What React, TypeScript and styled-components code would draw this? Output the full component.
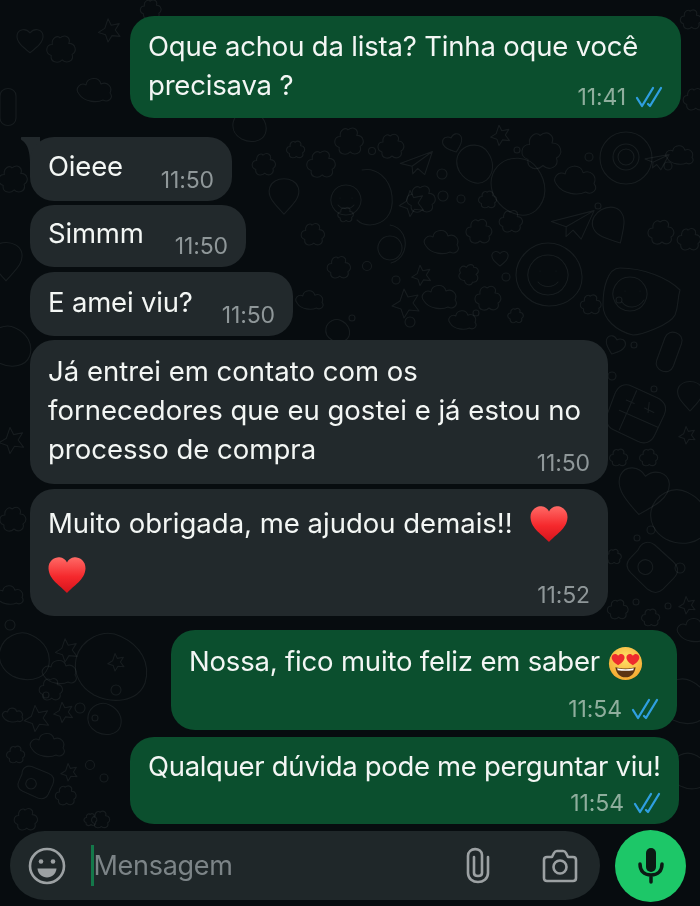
import { styled, createGlobalStyle } from "styled-components";

const GlobalStyle = createGlobalStyle`
  html, body {
    margin: 0;
    padding: 0;
    background: #070c0f;
  }
`;

const Page = styled.div`
  position: relative;
  width: 700px;
  height: 906px;
  overflow: hidden;
  background: #070c0f;
  font-family: Inter, "Liberation Sans", sans-serif;
  display: flex;
  flex-direction: column;
  filter: blur(0.35px);
`;

const Wallpaper = styled.svg`
  position: absolute;
  inset: 0;
  width: 700px;
  height: 906px;
  fill: none;
  stroke: rgba(190, 205, 200, 0.09);
  stroke-width: 1.1;
  stroke-linecap: round;
  stroke-linejoin: round;
`;

const Chat = styled.main`
  position: relative;
  flex: 1;
  display: flex;
  flex-direction: column;
  padding-top: 16px;
`;

const Bubble = styled.div<{ $out?: boolean; $w: number; $h: number; $top?: number; $inset: number; $pad?: number }>`
  display: grid;
  grid-template-columns: minmax(0, 1fr);
  box-sizing: border-box;
  width: ${(p) => p.$w}px;
  height: ${(p) => p.$h}px;
  margin-top: ${(p) => p.$top ?? 0}px;
  align-self: ${(p) => (p.$out ? "flex-end" : "flex-start")};
  margin-left: ${(p) => (p.$out ? 0 : p.$inset)}px;
  margin-right: ${(p) => (p.$out ? p.$inset : 0)}px;
  padding: ${(p) => p.$pad ?? 10}px 18px 8px 18px;
  border-radius: 24px;
  background: ${(p) => (p.$out ? "#0b4f2e" : "#22292c")};
`;

const Tail = styled.svg`
  position: absolute;
  left: 20px;
  top: 137px;
  width: 20px;
  height: 26px;
  fill: #22292c;
`;

const Text = styled.div<{ $lh?: number; $track?: number }>`
  grid-area: 1 / 1;
  align-self: start;
  color: #f3f6f4;
  font-size: 27.5px;
  line-height: ${(p) => p.$lh ?? 39}px;
  letter-spacing: ${(p) => p.$track ?? -0.18}px;
  white-space: nowrap;
`;

const Meta = styled.div<{ $out?: boolean }>`
  grid-area: 1 / 1;
  align-self: end;
  justify-self: end;
  display: flex;
  align-items: center;
  gap: 9px;
  height: 26px;
  color: ${(p) => (p.$out ? "#8fae9d" : "#8f9799")};
  font-size: 23px;
  letter-spacing: -0.1px;
`;

const Checks = styled.svg`
  width: 28px;
  height: 22px;
  fill: none;
  stroke: #2f9fe0;
  stroke-width: 2.3;
  stroke-linecap: round;
  stroke-linejoin: round;
`;

const Emoji = styled.svg<{ $gap?: number; $size?: number }>`
  width: ${(p) => p.$size ?? 38}px;
  height: ${(p) => p.$size ?? 38}px;
  vertical-align: -10px;
  margin-left: ${(p) => p.$gap ?? 0}px;
`;

const Composer = styled.footer`
  position: relative;
  display: flex;
  align-items: flex-start;
  gap: 15px;
  height: 82px;
  padding: 6px 14px 0 10px;
  box-sizing: border-box;
`;

const InputBar = styled.div`
  flex: 1;
  height: 69px;
  margin-top: 1px;
  display: flex;
  align-items: center;
  padding: 0 22px 0 18px;
  border-radius: 35px;
  background: #1f2729;
  color: #9ca1a3;
`;

const Caret = styled.span`
  width: 2.5px;
  height: 41px;
  margin-left: 25px;
  background: #14784a;
`;

const Placeholder = styled.span`
  flex: 1;
  padding-left: 0;
  color: #7c8487;
  font-size: 27px;
  letter-spacing: -0.3px;
`;

const BarIcon = styled.svg<{ $gap?: number }>`
  flex: none;
  margin-left: ${(p) => p.$gap ?? 0}px;
  fill: none;
  stroke: currentColor;
  stroke-width: 2.6;
  stroke-linecap: round;
  stroke-linejoin: round;
`;

const MicButton = styled.button`
  width: 71px;
  height: 72px;
  padding: 0;
  border: 0;
  border-radius: 50%;
  background: #1dc768;
  display: flex;
  align-items: center;
  justify-content: center;
`;

const doodles: Record<string, string> = {
  flower: "M0 -11c5 -4 10 0 8 5c6 0 8 7 3 10c2 6 -5 9 -9 5c-4 4 -11 2 -10 -4c-6 -2 -5 -10 1 -10c-1 -6 5 -9 7 -6z",
  star: "M0 -14l4 8l10 -2l-5 8l6 8l-10 -1l-5 8l-3 -9l-9 -3l8 -5z",
  cloud: "M-16 4c-5 -6 2 -12 7 -9c1 -8 13 -9 15 -1c6 -3 12 3 9 9c4 5 -2 10 -7 7c-6 3 -19 2 -24 -6z",
  plane: "M-24 2l46 -17l-11 33l-10 -9l-7 8l-1 -11zM-7 6l29 -21",
  heart: "M0 16c-9 -7 -18 -14 -16 -23c2 -7 11 -8 16 -2c5 -6 14 -5 16 2c2 9 -7 16 -16 23z",
  blob: "M-24 -4c3 -13 18 -21 30 -15c13 6 20 18 16 31c-5 13 -22 14 -34 8c-9 -5 -14 -14 -12 -24z",
  pin: "M0 16c-8 -9 -14 -14 -12 -22c3 -10 21 -10 24 0c2 8 -4 13 -12 22z",
  pill: "M-8 -14c0 -10 16 -10 16 0v22c0 10 -16 10 -16 0z",
  bag: "M-20 -8c0 -8 6 -12 13 -10l22 9c7 3 9 8 6 15l-6 13c-3 6 -8 7 -14 5l-20 -9c-6 -3 -8 -8 -5 -14z M-8 -2a7 7 0 1 0 .1 0z",
  calc: "M-22 -12c3 -7 8 -10 15 -7l22 10c6 3 9 8 6 15l-8 17c-3 7 -9 9 -15 6l-21 -10c-6 -3 -8 -9 -5 -15z M-18 2l34 15 M-3 -15l-15 34 M-12 -7l7 3 M4 0l8 4 M8 -5l-1 9",
};

type Doodle = [keyof typeof doodles, number, number, number?, number?];

const placed: Doodle[] = [
  ["flower", 348, 142, 1.1], ["flower", 390, 147, 1], ["plane", 417, 162, 0.7], ["heart", 453, 143, 0.6, -20],
  ["blob", 476, 163, 0.8, 30], ["star", 499, 135, 0.7], ["flower", 540, 152, 1.5], ["flower", 487, 200, 0.7],
  ["blob", 520, 185, 1.2, 30], ["cloud", 576, 180, 1.2], ["flower", 320, 165, 1.1], ["flower", 420, 200, 1.1],
  ["star", 410, 203, 0.9], ["plane", 573, 222, 0.9, 6], ["pin", 610, 225, 1.3, -30], ["flower", 660, 233, 1],
  ["flower", 478, 232, 1], ["cloud", 442, 242, 1], ["flower", 510, 222, 0.9], ["heart", 500, 258, 0.5],
  ["star", 420, 275, 0.7], ["flower", 338, 268, 0.9], ["flower", 468, 274, 0.8, 40], ["cloud", 440, 297, 1],
  ["flower", 487, 299, 1], ["star", 404, 303, 1], ["cloud", 463, 320, 0.8], ["flower", 515, 316, 0.6],
  ["flower", 590, 305, 0.8], ["flower", 688, 240, 0.9], ["plane", 657, 160, 0.5, 10], ["cloud", 680, 155, 0.8],
  ["pill", 668, 355, 1.1, 20], ["heart", 615, 345, 0.6, 20], ["pin", 690, 395, 1], ["calc", 640, 408, 1.15],
  ["star", 686, 435, 0.6], ["flower", 618, 458, 0.7], ["flower", 648, 458, 0.7], ["heart", 643, 490, 1.55, 10],
  ["blob", 680, 515, 1.2], ["bag", 655, 565, 1.05, 20], ["flower", 613, 557, 0.6], ["star", 686, 605, 0.6],
  ["flower", 617, 610, 0.8], ["flower", 650, 618, 0.7], ["cloud", 695, 630, 1], ["blob", 685, 700, 1], ["blob", 690, 770, 0.8],
  ["pill", 8, 110, 1], ["flower", 12, 180, 1.1], ["pin", 6, 260, 1.3], ["blob", 10, 345, 0.9], ["star", 10, 440, 0.9],
  ["flower", 12, 520, 1], ["cloud", 10, 595, 0.8], ["blob", 25, 655, 1.05], ["cloud", 60, 672, 1],
  ["star", 65, 650, 0.8], ["blob", 112, 665, 1.5], ["star", 115, 662, 0.6], ["flower", 50, 690, 0.9],
  ["cloud", 13, 715, 0.6], ["star", 35, 718, 0.9], ["star", 62, 712, 0.7], ["blob", 105, 718, 0.7], ["cloud", 48, 745, 1],
  ["flower", 15, 755, 0.7], ["bag", 37, 780, 0.75], ["star", 68, 772, 0.6], ["flower", 65, 796, 0.8],
  ["flower", 25, 820, 0.9], ["flower", 100, 820, 0.7], ["flower", 90, 820, 0.5],
  ["flower", 150, 10, 0.8], ["flower", 60, 50, 1.1], ["cloud", 95, 90, 1], ["heart", 30, 40, 0.8], ["star", 108, 30, 0.8],
  ["blob", 250, 125, 0.7], ["flower", 295, 150, 0.7], ["flower", 263, 165, 0.9], ["pin", 284, 195, 1.2], ["flower", 312, 235, 0.9],
  ["flower", 345, 215, 0.6], ["cloud", 310, 300, 0.8], ["blob", 338, 330, 0.5], ["flower", 690, 20, 0.8], ["flower", 694, 100, 0.9],
];

const dots: [number, number, number][] = [
  [372, 151, 3.5], [442, 174, 5], [443, 196, 5], [461, 199, 4], [517, 150, 3], [589, 157, 4], [367, 266, 4.5], [396, 280, 4],
  [506, 277, 4], [668, 166, 4], [598, 206, 3], [619, 300, 3], [634, 345, 3], [654, 389, 3], [612, 376, 4], [651, 530, 4],
  [637, 538, 3], [680, 568, 5], [636, 602, 3], [668, 606, 3], [46, 695, 3], [116, 690, 5], [80, 708, 5], [95, 718, 3],
  [90, 765, 4.5], [104, 778, 4], [10, 625, 5], [352, 318, 3], [410, 322, 5], [476, 313, 3],
];

function Heart({ gap }: { gap?: number }) {
  return (
    <Emoji $gap={gap} viewBox="0 0 38 38">
      <defs>
        <linearGradient id="heartFill" x1="0" y1="0" x2="0" y2="1">
          <stop offset="0" stopColor="#ff6a66" />
          <stop offset="0.55" stopColor="#f5282c" />
          <stop offset="1" stopColor="#d5141c" />
        </linearGradient>
      </defs>
      <path
        fill="url(#heartFill)"
        d="M19 37C13 30 1 24 .5 12.5C.2 4.500 7 .8 11.500 1.200C15 1.500 17.800 3.500 19 6.500C20.200 3.500 23 1.500 26.500 1.200C31 .8 37.800 4.500 37.500 12.500C37 24 25 30 19 37z"
      />
    </Emoji>
  );
}

function HeartEyes() {
  return (
    <Emoji $gap={0} $size={35} viewBox="0 0 38 38">
      <defs>
        <radialGradient id="faceFill" cx="0.5" cy="0.35" r="0.7">
          <stop offset="0" stopColor="#ffe168" />
          <stop offset="1" stopColor="#f3a52c" />
        </radialGradient>
      </defs>
      <circle cx="19" cy="19" r="18" fill="url(#faceFill)" />
      <path fill="#ee2b2e" d="M11 21c-3 -2 -7 -5 -7 -8.500c0 -4 5 -5 7 -2c2 -3 7 -2 7 2c0 3.500 -4 6.500 -7 8.500z" />
      <path fill="#ee2b2e" d="M27 21c-3 -2 -7 -5 -7 -8.500c0 -4 5 -5 7 -2c2 -3 7 -2 7 2c0 3.500 -4 6.500 -7 8.500z" />
      <path fill="#5b3413" d="M8 23c7 2 15 2 22 0c-1 7 -5 11 -11 11s-10 -4 -11 -11z" />
      <path fill="#fff" d="M10 24.200c6 1.300 12 1.300 18 0l-.5 2c-5.500 1 -11.500 1 -17 0z" />
    </Emoji>
  );
}

function Read() {
  return (
    <Checks viewBox="0 0 28 22">
      <path d="M2 12l5 8L18 2" />
      <path d="M13 18l2 2L26 2" />
    </Checks>
  );
}

export default function App() {
  return (
    <Page>
      <GlobalStyle />
      <Wallpaper viewBox="0 0 700 906">
        {placed.map(([kind, x, y, s = 1, r = 0], i) => (
          <path key={i} d={doodles[kind]} transform={`translate(${x} ${y}) rotate(${r}) scale(${s})`} vectorEffect="non-scaling-stroke" />
        ))}
        {dots.map(([x, y, r], i) => (
          <circle key={i} cx={x} cy={y} r={r} />
        ))}
        <circle cx="626" cy="158" r="26" />
        <circle cx="626" cy="157" r="13" />
        <circle cx="626" cy="157" r="8" />
        <path d="M346 185a15 15 0 1 1 -.1 0zM340 198h.1M352 198h.1M338 205c4 5 12 5 16 0M362 170c14 -3 28 8 30 26c2 19 -8 28 -22 29c-6 0 -10 -2 -13 -5" />
        <path d="M390 225c12 2 18 14 14 26c-3 8 -9 11 -13 12M390 236a12 12 0 1 1 -.1 0z" />
        <path d="M548 243c16 0 33 13 34 33c1 17 -14 30 -33 30c-16 0 -33 -13 -33 -31c0 -18 16 -32 32 -32z" />
        <path d="M548 255a20 20 0 1 1 -.1 0zM540 271h.1M556 271h.1M538 282c5 6 15 6 20 0" />
        <path d="M620 268c24 0 48 10 60 22c-3 10 -1 15 -5 25c-5 10 -34 20 -42 20c-17 -4 -30 -16 -30 -30c0 -16 4 -37 17 -37z" />
        <path d="M630 277a17 17 0 1 1 -.1 0zM625 291h.1M640 291h.1M622 302c5 7 16 7 22 -2" />
      </Wallpaper>
      <Tail viewBox="0 0 20 26">
        <path d="M1.500 0H20V26H10C10 16 8 8 3 4C.5 3 .5 .8 1.500 0z" />
      </Tail>
      <Chat>
        <Bubble $out $w={551} $h={102} $inset={19} $pad={11}>
          <Text>
            Oque achou da lista? Tinha oque você
            <br />
            precisava ?
          </Text>
          <Meta $out>
            11:41
            <Read />
          </Meta>
        </Bubble>
        <Bubble $w={202} $h={64} $top={19} $inset={30}>
          <Text>Oieee</Text>
          <Meta>11:50</Meta>
        </Bubble>
        <Bubble $w={216} $h={62} $top={4} $inset={30} $pad={9}>
          <Text>Simmm</Text>
          <Meta>11:50</Meta>
        </Bubble>
        <Bubble $w={263} $h={64} $top={5} $inset={30} $pad={11}>
          <Text>E amei viu?</Text>
          <Meta>11:50</Meta>
        </Bubble>
        <Bubble $w={578} $h={144} $top={4} $inset={30} $pad={12}>
          <Text $track={0.02}>
            Já entrei em contato com os
            <br />
            fornecedores que eu gostei e já estou no
            <br />
            processo de compra
          </Text>
          <Meta>11:50</Meta>
        </Bubble>
        <Bubble $w={578} $h={127} $top={5} $inset={30} $pad={9}>
          <Text $lh={51} $track={0}>
            Muito obrigada, me ajudou demais!!
            <Heart gap={17} />
            <br />
            <Heart />
          </Text>
          <Meta>11:52</Meta>
        </Bubble>
        <Bubble $out $w={506} $h={100} $top={14} $inset={23} $pad={12}>
          <Text>
            Nossa, fico muito feliz em saber <HeartEyes />
          </Text>
          <Meta $out>
            11:54
            <Read />
          </Meta>
        </Bubble>
        <Bubble $out $w={549} $h={87} $top={7} $inset={21}>
          <Text $track={-0.32}>Qualquer dúvida pode me perguntar viu!</Text>
          <Meta $out>
            11:54
            <Read />
          </Meta>
        </Bubble>
      </Chat>
      <Composer>
        <InputBar>
          <BarIcon width="38" height="38" viewBox="0 0 38 38">
            <circle cx="19" cy="19" r="17" />
            <circle cx="13" cy="14.500" r="2.300" fill="currentColor" stroke="none" />
            <circle cx="25" cy="14.500" r="2.300" fill="currentColor" stroke="none" />
            <path d="M9.500 21.500h19c-.5 5.500 -4.500 9 -9.500 9s-9 -3.500 -9.500 -9z" fill="currentColor" stroke="none" />
          </BarIcon>
          <Caret />
          <Placeholder>Mensagem</Placeholder>
          <BarIcon width="28" height="38" viewBox="0 0 28 38">
            <path d="M10 10v16c0 4 8 4 8 0V8c0 -8 -14 -8 -14 1v17c0 12 20 12 20 0V10" />
          </BarIcon>
          <BarIcon $gap={50} width="36" height="34" viewBox="0 0 36 34">
            <path d="M5 8h5l2 -4c.5 -1 1 -2 3 -2h6c2 0 2.500 1 3 2l2 4h5c2 0 3 1 3 3v18c0 2 -1 3 -3 3H5c-2 0 -3 -1 -3 -3V11c0 -2 1 -3 3 -3z" />
            <circle cx="18" cy="18" r="6.500" />
          </BarIcon>
        </InputBar>
        <MicButton aria-label="Gravar">
          <svg width="34" height="38" viewBox="0 0 34 38" fill="none" stroke="#0b1a14" strokeWidth="3.500" strokeLinecap="round">
            <rect x="12" y="1" width="10" height="24" rx="5" fill="#0b1a14" stroke="none" />
            <path d="M6 17c0 7 4 11 11 11s11 -4 11 -11M17 28v7" />
          </svg>
        </MicButton>
      </Composer>
    </Page>
  );
}
